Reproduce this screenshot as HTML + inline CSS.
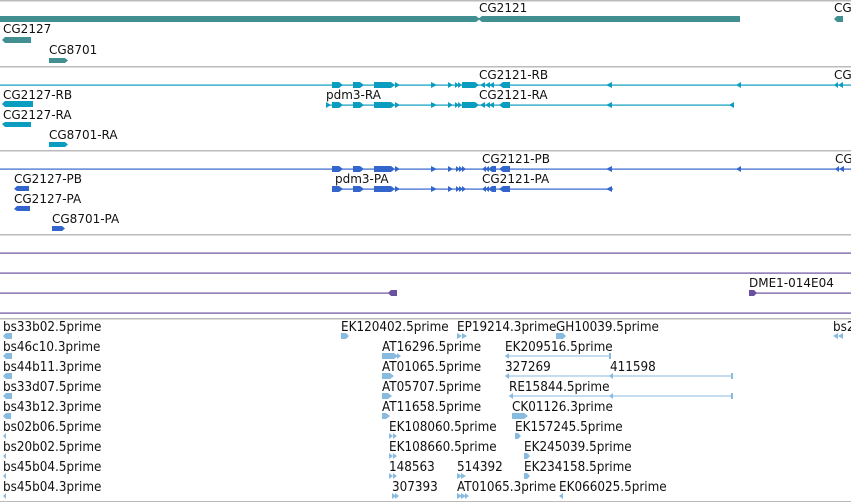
<!DOCTYPE html>
<html><head><meta charset="utf-8"><style>
body{margin:0;width:851px;height:502px;overflow:hidden;background:#fff;position:relative;font-family:"DejaVu Sans","Liberation Sans",sans-serif;}
.t{position:absolute;font-size:12px;line-height:12px;color:#111;white-space:nowrap;}
.e{position:absolute;font-size:12px;line-height:13px;color:#111;white-space:nowrap;transform:scaleY(1.08);transform-origin:0 0;}
svg{position:absolute;left:0;top:0;}
</style></head><body>
<svg width="851" height="502" viewBox="0 0 851 502">
<g fill="#bbb"><rect x="0" y="0" width="851" height="1.5"/><rect x="0" y="66" width="851" height="1.5"/><rect x="0" y="150" width="851" height="1.5"/><rect x="0" y="234" width="851" height="1.5"/><rect x="0" y="318" width="851" height="1.5"/><rect x="0" y="501" width="851" height="1.5"/></g>
<g fill="#428f91">
<rect x="0" y="16" width="476" height="6"/><polygon points="476,16 480,19 476,22"/>
<polygon points="478,19 482,16 740,16 740,22 482,22"/>
<polygon points="834,19 837,16 843,16 843,22 837,22"/>
<polygon points="2,40 5,37 31,37 31,43 5,43"/>
<polygon points="49,58 65,58 68,60.5 65,63 49,63"/>
</g>
<g fill="#0a9dbf" stroke="none">
<rect x="0" y="84.5" width="851" height="1.2"/>
<rect x="326" y="104.5" width="407" height="1.2"/>
<polygon points="2,104 5,101 33,101 33,107 5,107"/>
<polygon points="2,124 5,122 31,122 31,127 5,127"/>
<polygon points="49,142 65,142 68,144.5 65,147 49,147"/>
<polygon points="834,85 838,82 838,88"/><polygon points="838,85 843,82 843,88"/>
</g>
<g id="tx" fill="#0a9dbf">
<polygon points="332,82 339,82 343,85 339,88 332,88"/>
<polygon points="353,82 360,82 364,85 360,88 353,88"/>
<rect x="374" y="82" width="17" height="6"/><polygon points="391,82 395,85 391,88"/><polygon points="395,82 400,85 395,88"/>
<polygon points="431,82 437,85 431,88"/><polygon points="448,82 453,85 448,88"/>
<polygon points="455,82 459,85 455,88"/><polygon points="458,82 462,85 458,88"/>
<rect x="462" y="82" width="13" height="6"/><polygon points="475,82 479,85 475,88"/>
<polygon points="480,85 485,82 485,88"/><polygon points="485,85 490,82 490,88"/><polygon points="489,85 494,82 494,88"/>
<polygon points="499,85 503,82 510,82 510,88 503,88"/>
<polygon points="606,85 612,82 612,88"/>
</g>
<use href="#tx" transform="translate(0,20)"/>
<g fill="#0a9dbf"><polygon points="736,85 741,82 741,88"/><polygon points="729,105 734,102 734,108"/><polygon points="326,102 331,105 326,108"/></g>
<g fill="#3366cc">
<rect x="0" y="168.5" width="851" height="1.2"/>
<rect x="335" y="188.5" width="278" height="1.2"/>
<polygon points="14,189 17,186 29,186 29,191 17,191"/>
<polygon points="14,209 17,206 30,206 30,211 17,211"/>
<polygon points="52,226 62,226 65,228.5 62,231 52,231"/>
<polygon points="835,169 839,166 839,172"/><polygon points="839,169 844,166 844,172"/>
<polygon points="736,169 741,166 741,172"/>
<polygon points="335,186 340,189 335,192"/>
</g>
<g id="px" fill="#3366cc">
<polygon points="332,166 339,166 343,169 339,172 332,172"/>
<polygon points="353,166 360,166 364,169 360,172 353,172"/>
<rect x="374" y="166" width="17" height="6"/><polygon points="391,166 395,169 391,172"/><polygon points="395,166 400,169 395,172"/>
<polygon points="431,166 437,169 431,172"/><polygon points="448,166 453,169 448,172"/>
<polygon points="456,166 460,169 456,172"/><polygon points="459,166 463,169 459,172"/><polygon points="462,166 466,169 462,172"/>
<polygon points="482,169 486,166 486,172"/><polygon points="485,169 489,166 489,172"/><polygon points="488,169 492,166 496,166 496,172 492,172"/>
<polygon points="499,169 503,166 510,166 510,172 503,172"/>
<polygon points="606,169 612,166 612,172"/>
</g>
<use href="#px" transform="translate(0,20)"/>
<g fill="#6a50a0">
<rect x="0" y="252.5" width="851" height="1.2"/>
<rect x="0" y="272.5" width="851" height="1.2"/>
<rect x="0" y="292.5" width="392" height="1.2"/>
<polygon points="388,293 391,290 397,290 397,296 391,296"/>
<rect x="749" y="292.5" width="102" height="1.2"/>
<polygon points="749,290 754,290 757,293 754,296 749,296"/>
<rect x="0" y="312.5" width="851" height="1.2"/>
</g>
<g fill="#88bbe0">
<polygon points="3,336 6,333 12,333 12,339 6,339"/>
<polygon points="341,333 346,333 349,336 346,339 341,339"/>
<polygon points="457,333 462,336 457,339"/><polygon points="462,333 467,336 462,339"/>
<polygon points="556,333 563,333 566,336 563,339 556,339"/>
<polygon points="833,336 838,333 838,339"/><polygon points="838,336 843,333 843,339"/>
<polygon points="3,356 6,353 12,353 12,359 6,359"/>
<rect x="382" y="353" width="12" height="6"/><polygon points="394,353 398,356 394,359"/><polygon points="397,353 401,356 397,359"/>
<rect x="505" y="355.5" width="106" height="1"/><polygon points="505,356 509,353 509,359"/><rect x="609" y="353" width="2" height="6"/>
<polygon points="3,376 6,373 12,373 12,379 6,379"/>
<polygon points="382,373 390,373 394,376 390,379 382,379"/>
<rect x="505" y="375.5" width="228" height="1"/><polygon points="505,376 509,373 509,379"/><polygon points="609,376 613,373 613,379"/><rect x="731" y="373" width="2" height="6"/>
<polygon points="3,396 6,393 12,393 12,399 6,399"/>
<polygon points="382,393 388,393 392,396 388,399 382,399"/>
<rect x="509" y="395.5" width="224" height="1"/><polygon points="509,396 513,393 513,399"/><polygon points="609,396 613,393 613,399"/><rect x="731" y="393" width="2" height="6"/>
<polygon points="3,416 6,413 11,413 11,419 6,419"/>
<polygon points="382,413 386,413 390,416 386,419 382,419"/>
<polygon points="512,413 524,413 528,416 524,419 512,419"/>
<polygon points="3,436 6,433 6,439"/>
<polygon points="389,433 393,436 389,439"/><polygon points="393,433 397,436 393,439"/>
<polygon points="515,433 518,433 521,436 518,439 515,439"/>
<polygon points="3,456 6,453 6,459"/>
<polygon points="389,453 393,456 389,459"/><polygon points="393,453 397,456 393,459"/>
<polygon points="524,453 527,453 530,456 527,459 524,459"/>
<polygon points="3,476 6,473 6,479"/>
<polygon points="389,473 393,476 389,479"/><polygon points="393,473 397,476 393,479"/>
<polygon points="457,473 462,476 457,479"/><polygon points="461,473 466,476 461,479"/>
<polygon points="524,473 527,473 530,476 527,479 524,479"/>
<polygon points="3,496 6,493 6,499"/>
<polygon points="392,493 396,496 392,499"/><polygon points="395,493 399,496 395,499"/>
<polygon points="457,493 462,496 457,499"/><polygon points="461,493 466,496 461,499"/><polygon points="465,493 469,496 465,499"/>
<polygon points="559,496 563,493 563,499"/>
</g>
</svg>
<div class="t" style="left:479px;top:2px">CG2121</div>
<div class="t" style="left:834px;top:2px">CG</div>
<div class="t" style="left:3px;top:23px">CG2127</div>
<div class="t" style="left:49px;top:44px">CG8701</div>
<div class="t" style="left:479px;top:69px">CG2121-RB</div>
<div class="t" style="left:834px;top:69px">CG</div>
<div class="t" style="left:3px;top:89px">CG2127-RB</div>
<div class="t" style="left:326px;top:89px">pdm3-RA</div>
<div class="t" style="left:479px;top:89px">CG2121-RA</div>
<div class="t" style="left:3px;top:109px">CG2127-RA</div>
<div class="t" style="left:49px;top:129px">CG8701-RA</div>
<div class="t" style="left:482px;top:153px">CG2121-PB</div>
<div class="t" style="left:835px;top:153px">CG</div>
<div class="t" style="left:14px;top:173px">CG2127-PB</div>
<div class="t" style="left:335px;top:173px">pdm3-PA</div>
<div class="t" style="left:482px;top:173px">CG2121-PA</div>
<div class="t" style="left:14px;top:193px">CG2127-PA</div>
<div class="t" style="left:52px;top:213px">CG8701-PA</div>
<div class="t" style="left:749px;top:277px">DME1-014E04</div>

<div class="e" style="left:3px;top:320px">bs33b02.5prime</div>
<div class="e" style="left:341px;top:320px">EK120402.5prime</div>
<div class="e" style="left:457px;top:320px">EP19214.3prime</div>
<div class="e" style="left:556px;top:320px">GH10039.5prime</div>
<div class="e" style="left:833px;top:320px">bs2</div>
<div class="e" style="left:3px;top:340px">bs46c10.3prime</div>
<div class="e" style="left:382px;top:340px">AT16296.5prime</div>
<div class="e" style="left:505px;top:340px">EK209516.5prime</div>
<div class="e" style="left:3px;top:360px">bs44b11.3prime</div>
<div class="e" style="left:382px;top:360px">AT01065.5prime</div>
<div class="e" style="left:505px;top:360px">327269</div>
<div class="e" style="left:610px;top:360px">411598</div>
<div class="e" style="left:3px;top:380px">bs33d07.5prime</div>
<div class="e" style="left:382px;top:380px">AT05707.5prime</div>
<div class="e" style="left:509px;top:380px">RE15844.5prime</div>
<div class="e" style="left:3px;top:400px">bs43b12.3prime</div>
<div class="e" style="left:382px;top:400px">AT11658.5prime</div>
<div class="e" style="left:512px;top:400px">CK01126.3prime</div>
<div class="e" style="left:3px;top:420px">bs02b06.5prime</div>
<div class="e" style="left:389px;top:420px">EK108060.5prime</div>
<div class="e" style="left:515px;top:420px">EK157245.5prime</div>
<div class="e" style="left:3px;top:440px">bs20b02.5prime</div>
<div class="e" style="left:389px;top:440px">EK108660.5prime</div>
<div class="e" style="left:524px;top:440px">EK245039.5prime</div>
<div class="e" style="left:3px;top:460px">bs45b04.5prime</div>
<div class="e" style="left:389px;top:460px">148563</div>
<div class="e" style="left:457px;top:460px">514392</div>
<div class="e" style="left:524px;top:460px">EK234158.5prime</div>
<div class="e" style="left:3px;top:480px">bs45b04.3prime</div>
<div class="e" style="left:392px;top:480px">307393</div>
<div class="e" style="left:457px;top:480px">AT01065.3prime</div>
<div class="e" style="left:559px;top:480px">EK066025.5prime</div>
</body></html>
